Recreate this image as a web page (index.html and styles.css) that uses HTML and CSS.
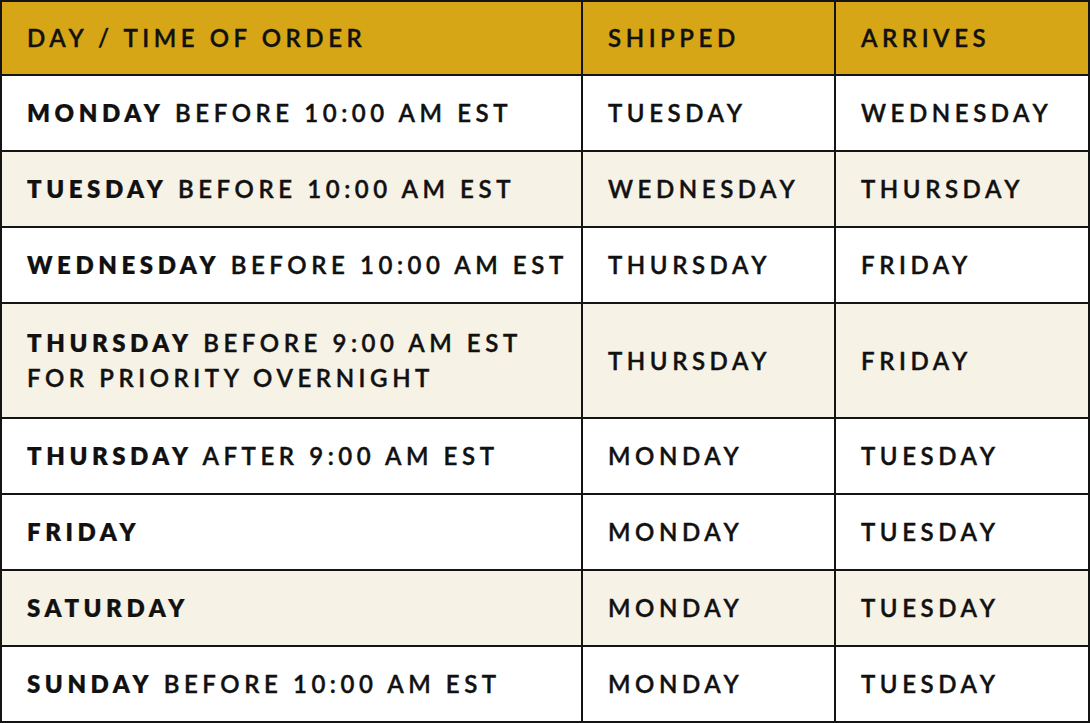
FILE: index.html
```html
<!DOCTYPE html>
<html lang="en">
<head>
<meta charset="utf-8">
<title>Shipping schedule</title>
<link rel="stylesheet" href="styles.css">
</head>
<body>
<div class="schedule">
  <div class="cell head"><span>DAY / TIME OF ORDER</span></div>
  <div class="cell head"><span>SHIPPED</span></div>
  <div class="cell head"><span>ARRIVES</span></div>

  <div class="cell"><span><b>MONDAY</b> BEFORE 10:00 AM EST</span></div>
  <div class="cell"><span>TUESDAY</span></div>
  <div class="cell"><span>WEDNESDAY</span></div>

  <div class="cell alt"><span><b>TUESDAY</b> BEFORE 10:00 AM EST</span></div>
  <div class="cell alt"><span>WEDNESDAY</span></div>
  <div class="cell alt"><span>THURSDAY</span></div>

  <div class="cell"><span><b>WEDNESDAY</b> BEFORE 10:00 AM EST</span></div>
  <div class="cell"><span>THURSDAY</span></div>
  <div class="cell"><span>FRIDAY</span></div>

  <div class="cell alt tall"><span><b>THURSDAY</b> BEFORE 9:00 AM EST<br>FOR PRIORITY OVERNIGHT</span></div>
  <div class="cell alt"><span>THURSDAY</span></div>
  <div class="cell alt"><span>FRIDAY</span></div>

  <div class="cell"><span><b>THURSDAY</b> AFTER 9:00 AM EST</span></div>
  <div class="cell"><span>MONDAY</span></div>
  <div class="cell"><span>TUESDAY</span></div>

  <div class="cell"><span><b>FRIDAY</b></span></div>
  <div class="cell"><span>MONDAY</span></div>
  <div class="cell"><span>TUESDAY</span></div>

  <div class="cell alt"><span><b>SATURDAY</b></span></div>
  <div class="cell alt"><span>MONDAY</span></div>
  <div class="cell alt"><span>TUESDAY</span></div>

  <div class="cell"><span><b>SUNDAY</b> BEFORE 10:00 AM EST</span></div>
  <div class="cell"><span>MONDAY</span></div>
  <div class="cell"><span>TUESDAY</span></div>
</div>
</body>
</html>
```

FILE: styles.css
```css
html, body {
  margin: 0;
  padding: 0;
  background: #ffffff;
}

.schedule {
  display: grid;
  grid-template-columns: 579px 251px 252px;
  grid-template-rows: 72px 74px 74px 74px 113px 74px 74px 74px 74px;
  gap: 2px;
  padding: 2px;
  background: #141414;
  width: 1086px;
  height: 719px;
  font-family: "Lato", "Liberation Sans", sans-serif;
  font-weight: 600;
  font-size: 24px;
  letter-spacing: 0.19em;
  color: #111111;
  -webkit-text-stroke: 0.4px #111111;
}

.cell {
  display: flex;
  align-items: center;
  padding: 0 0 0 25px;
  background: #ffffff;
  white-space: nowrap;
}

.cell span {
  margin-top: -1px;
}

.cell b {
  font-weight: 800;
  letter-spacing: 0.19em;
  -webkit-text-stroke: 0.2px #111111;
}

.cell.alt {
  background: #f6f2e6;
}

.cell.head {
  background: #d7a616;
  letter-spacing: 0.19em;
}

.cell.tall span {
  line-height: 35px;
}
```
